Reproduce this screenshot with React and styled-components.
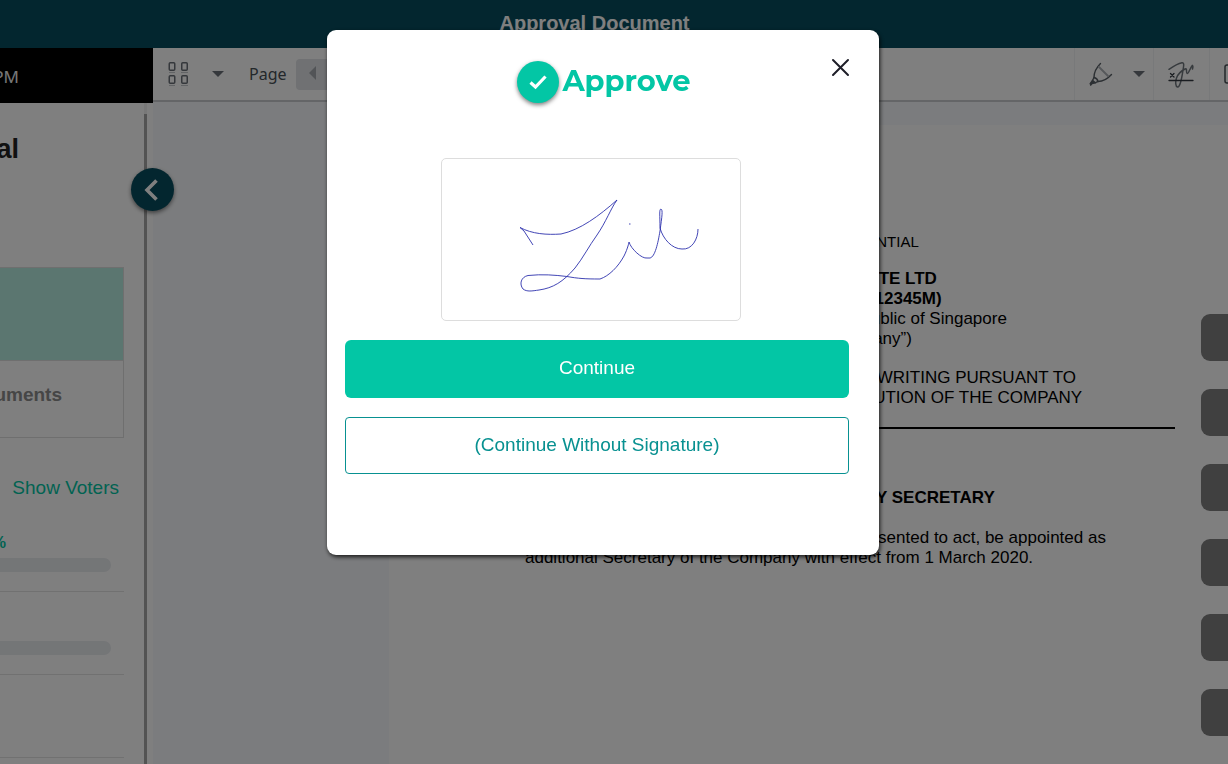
import React from "react";
import styled, { createGlobalStyle } from "styled-components";

const GlobalStyle = createGlobalStyle`
  * {
    box-sizing: border-box;
  }

  body {
    margin: 0;
    overflow: hidden;
    font-family: "Liberation Sans", Arial, sans-serif;
    background: white;
  }

  button {
    font-family: inherit;
    padding: 0;
    border: none;
    background: none;
    cursor: pointer;
  }

  h1, h2, p {
    margin: 0;
  }
`;

const Page = styled.div`
  display: flex;
  flex-direction: column;
  height: 100vh;
`;

const Header = styled.header`
  flex: none;
  height: 48px;
  padding-right: 39px;
  background: #064c5e;
  color: white;
  text-align: center;

  h1 {
    font-size: 20px;
    line-height: 46px;
  }
`;

const Body = styled.div`
  display: flex;
  flex: 1;
  min-height: 0;
`;

const Sidebar = styled.aside`
  position: relative;
  display: flex;
  flex-direction: column;
  flex: none;
  width: 153px;
  background: white;
`;

const Clock = styled.div`
  display: flex;
  justify-content: flex-end;
  flex: none;
  padding-right: 134px;
  overflow: hidden;
  background: black;
  color: #eee;
  font-family: "Noto Sans", sans-serif;
  font-size: 17px;
  line-height: 58px;
  height: 55px;
  white-space: nowrap;
`;

const SidebarScroll = styled.div`
  display: flex;
  flex: 1;
  min-height: 0;
  overflow: hidden;
`;

const Panel = styled.div`
  flex: 1;
  min-width: 0;
  padding-right: 20px;
  overflow: hidden;
`;

const Track = styled.div`
  width: 3px;
  margin-right: 6px;
  padding-top: 11px;
  background: #f0f0f0;

  &::after {
    content: "";
    display: block;
    height: 100%;
    background: #a6a6a6;
  }
`;

/* text that runs out of the panel on its left side */
const Line = styled.div`
  display: flex;
  justify-content: flex-end;
  white-space: nowrap;
`;

const Title = styled(Line)`
  padding: 30px 105px 0 0;
  font-size: 27px;
  font-weight: bold;
  line-height: 32px;
  color: #222;
`;

const Tabs = styled.div`
  margin-top: 102px;
  border: 1px solid #dedede;
  border-left: none;
`;

const ActiveTab = styled.div`
  height: 92px;
  background: #b6ede1;
`;

const Tab = styled(Line)`
  height: 77px;
  padding-right: 61px;
  border-top: 1px solid #dedede;
  color: #8c8c8c;
  font-size: 19px;
  font-weight: bold;
  line-height: 68px;
`;

const VotersLink = styled.a`
  display: block;
  margin: 38px 0 9px;
  padding-right: 5px;
  color: #03c6a5;
  font-size: 19px;
  line-height: 24px;
  text-align: right;
  text-decoration: none;
`;

const Vote = styled.div`
  display: flex;
  flex-direction: column;
  justify-content: flex-end;
  gap: 3px;
  height: 83px;
  padding: 0 13px 19px 0;
  border-bottom: 1px solid #e2e2e2;
`;

const Percent = styled(Line)`
  padding-right: 105px;
  color: #03c6a5;
  font-size: 16px;
  font-weight: bold;
  line-height: 24px;
`;

const Bar = styled.div`
  height: 14px;
  border-radius: 0 7px 7px 0;
  background: #e9ecef;
`;

const Collapse = styled.button`
  position: absolute;
  top: 120px;
  right: -21px;
  z-index: 1;
  display: flex;
  align-items: center;
  justify-content: center;
  width: 43px;
  height: 43px;
  padding-right: 4px;
  border-radius: 50%;
  background: #064c5e;
  box-shadow: 0 2px 4px rgba(0, 0, 0, 0.5);
`;

const Viewer = styled.main`
  position: relative;
  display: flex;
  flex-direction: column;
  flex: 1;
  min-width: 0;
  background: #f7f9fc;
`;

const Toolbar = styled.div`
  display: flex;
  align-items: center;
  justify-content: space-between;
  flex: none;
  height: 54px;
  border-bottom: 2px solid #c8cbcf;
  background: white;
  color: #485056;
  overflow: hidden;
`;

const Tools = styled.div`
  display: flex;
  align-items: center;
  height: 100%;
`;

const GridButton = styled.button`
  margin: 0 22px 0 15px;
  height: 25px;
`;

const Arrow = styled.span`
  border: 6px solid transparent;
  border-top-color: #6a7078;
  border-bottom: none;
`;

const PageLabel = styled.label`
  margin: 0 9px 0 25px;
  font-family: "Noto Sans", sans-serif;
  font-size: 16px;
`;

const PageStep = styled.button`
  width: 60px;
  height: 31px;
  padding-left: 13px;
  border-radius: 4px;
  background: #e0e2e6;
  text-align: left;
`;

const ToolGroup = styled.div`
  display: flex;
  align-items: center;
  gap: 20px;
  height: 100%;
  padding: 0 ${(props) => (props.$menu ? "8px" : "15px")} 0 14px;
  border-left: 1px solid #f1f3f5;

  button {
    flex: none;
  }

  svg {
    display: block;
  }
`;

/* last group runs past the right edge of the toolbar */
const CutGroup = styled(ToolGroup)`
  width: 19px;
  padding-right: 0;
  overflow: hidden;
`;

const Sheet = styled.article`
  flex: 1;
  min-height: 0;
  margin: 23px 0 0 236px;
  padding: 107px 53px 0 136px;
  overflow: hidden;
  background: white;
  color: black;
  font-size: 17px;
  line-height: 20px;
  white-space: nowrap;
`;

const Notice = styled.p`
  margin-bottom: 17px;
  font-size: 15px;
  text-align: center;
`;

const Centered = styled.div`
  display: flex;
  flex-direction: column;
  align-items: center;
  padding-bottom: 19px;
`;

const Clause = styled.div`
  padding-top: 59px;
  border-top: 2px solid black;

  p {
    margin-top: 20px;
  }
`;

const Rail = styled.div`
  position: absolute;
  top: 266px;
  right: 0;
  display: flex;
  flex-direction: column;
  gap: 28px;

  button {
    width: 27px;
    height: 47px;
    border-radius: 9px 0 0 9px;
    background: #808080;
  }
`;

const Overlay = styled.div`
  position: fixed;
  inset: 0;
  z-index: 10;
  display: flex;
  align-items: flex-start;
  justify-content: center;
  padding: 30px 22px 0 0;
  background: rgba(0, 0, 0, 0.5);
`;

const Modal = styled.section`
  position: relative;
  width: 552px;
  padding: 31px 30px 81px 18px;
  border-radius: 9px;
  background: white;
  box-shadow: 1px 2px 4px rgba(0, 0, 0, 0.8);
`;

const ModalTitle = styled.div`
  display: flex;
  align-items: center;
  justify-content: center;
  gap: 3px;
  padding-left: 14px;
  color: #03c6a5;

  h2 {
    padding-bottom: 2px;
    font-family: Montserrat, Inter, sans-serif;
    font-size: 29px;
    font-weight: 700;
    line-height: 38px;
  }
`;

const CheckBadge = styled.span`
  display: flex;
  align-items: center;
  justify-content: center;
  width: 42px;
  height: 42px;
  border-radius: 50%;
  background: #03c6a5;
  box-shadow: 0 2px 4px rgba(0, 0, 0, 0.5);
`;

const CloseButton = styled.button`
  position: absolute;
  top: 28px;
  right: 29px;
  width: 19px;
  height: 19px;
`;

const SignatureBox = styled.div`
  width: 300px;
  height: 163px;
  margin: 55px auto 19px 96px;
  border: 1px solid #ddd;
  border-radius: 5px;
`;

const ModalButton = styled.button`
  display: block;
  width: 100%;
  height: ${(props) => (props.$outlined ? "57px" : "58px")};
  margin-bottom: ${(props) => (props.$outlined ? "0" : "19px")};
  padding-bottom: ${(props) => (props.$outlined ? "1px" : "3px")};
  border: ${(props) => (props.$outlined ? "1px solid #089191" : "none")};
  border-radius: ${(props) => (props.$outlined ? "4px" : "6px")};
  background: ${(props) => (props.$outlined ? "white" : "#03c6a5")};
  color: ${(props) => (props.$outlined ? "#089191" : "white")};
  font-size: 19px;
`;

const GridIcon = () => (
  <svg width="22" height="25" viewBox="0 0 22 25" fill="none" stroke="#6a7078" strokeWidth="1.5">
    <rect x="1.250" y="0.750" width="5.500" height="7.500" rx="1" />
    <rect x="13.750" y="0.750" width="5.500" height="7.500" rx="1" />
    <rect x="1.250" y="13.750" width="5.500" height="7.500" rx="1" />
    <rect x="13.750" y="13.750" width="5.500" height="7.500" rx="1" />
    <path d="M1 10.500h6M13 10.500h7M1 23.500h6M13 23.500h7" stroke="#c5c8cc" strokeWidth="1" />
  </svg>
);

const PenIcon = () => (
  <svg width="24" height="24" viewBox="0 0 24 24" fill="none" stroke="#596067" strokeWidth="1.4" strokeLinecap="round">
    <path d="M11.500 1.500C7 6 5 10 5 15.500M22.500 12.500C18 17.500 14 19.500 9 19.500" />
    <path d="M10 5l9 9" stroke="#adb1b6" strokeWidth="2" />
    <path d="M5 15.500C7.500 16 8.500 17 9 19.500L6 20.800L3.500 18.500z" />
    <path d="M3.500 18.500L6 20.800L3 21.500L1.800 23L1.200 21.500z" fill="#596067" />
  </svg>
);

const SignIcon = () => (
  <svg width="26" height="28" viewBox="0 0 26 28" fill="none" strokeLinecap="round">
    <path
      d="M1 9.300C5 6.500 10 3.500 14 2.700C16 2.400 15.800 4.500 15.500 7C14.500 13 14 18 12.500 22.500C11.500 26 10.500 27.300 9.500 27C7.500 26.500 7.200 22 8.500 18C10 14 14 10.500 17 9C18.500 8.300 18.500 9.500 18.500 11C18.500 14 19.500 14.500 21 11.500C22 9.500 23 7 24.300 5.500C25.300 6 24.800 8 24.500 9"
      stroke="#6f767d"
      strokeWidth="1.5"
    />
    <path d="M2.500 13.500l3.500 3.500m0-3.500l-3.500 3.500M1 20.500h24" stroke="#343b42" strokeWidth="1.3" />
  </svg>
);

const BoxIcon = () => (
  <svg width="20" height="22" viewBox="0 0 20 22" fill="none" stroke="#485056" strokeWidth="1.5">
    <rect x="1" y="2" width="18" height="18" rx="2" />
    <path d="M5 8h6M5 15h6" stroke="#adb1b6" />
  </svg>
);

const Signature = () => (
  <svg width="298" height="161" viewBox="1 1 298 161" fill="none" stroke="#2c31ad" strokeWidth="0.9">
    <path d="M92 87L83 73L79 69.500C91 76 106 77 120 76C139 72 158 58 176 42C170 50 165 64 156 77C148 88 142 100 134 110C122 124 112 130 98 132C91 133 86 134 82 131C78 126 80 119 87 117.500C101 116 114 117 126 118.500C137 120.500 144 121 159 121C168 118 177 109 183 98C187 90 188 84 188 84C190 91 201 101 206 100H209C214 99 217 85 219 73C221 58 222 52 220 51C218 51 219 58 219 70C222 81 231 91 241 91C251 92 257 81 257 71" />
    <path d="M188 66h1.500" />
  </svg>
);

const App = () => {
  return (
    <>
      <GlobalStyle />
      <Page>
        <Header>
          <h1>Approval Document</h1>
        </Header>
        <Body>
          <Sidebar>
            <Clock>PM</Clock>
            <SidebarScroll>
              <Panel>
                <Title>Approval</Title>
                <Tabs>
                  <ActiveTab />
                  <Tab>Documents</Tab>
                </Tabs>
                <VotersLink href="#voters">Show Voters</VotersLink>
                <Vote>
                  <Percent>0%</Percent>
                  <Bar />
                </Vote>
                <Vote>
                  <Bar />
                </Vote>
                <Vote />
              </Panel>
              <Track />
            </SidebarScroll>
            <Collapse aria-label="Collapse sidebar">
              <svg width="14" height="22" viewBox="0 0 14 22" fill="none" stroke="white" strokeWidth="3.6">
                <path d="M12.500 1.500L3 11L12.500 20.500" />
              </svg>
            </Collapse>
          </Sidebar>

          <Viewer>
            <Toolbar>
              <Tools>
                <GridButton aria-label="Thumbnails">
                  <GridIcon />
                </GridButton>
                <Arrow />
                <PageLabel htmlFor="page-step">Page</PageLabel>
                <PageStep id="page-step" aria-label="Previous page">
                  <svg width="8" height="14" viewBox="0 0 8 14">
                    <path d="M7 0v14L0 7z" fill="#a5a9ae" />
                  </svg>
                </PageStep>
              </Tools>
              <Tools>
                <ToolGroup $menu>
                  <button aria-label="Draw">
                    <PenIcon />
                  </button>
                  <Arrow />
                </ToolGroup>
                <ToolGroup>
                  <button aria-label="Sign">
                    <SignIcon />
                  </button>
                </ToolGroup>
                <CutGroup>
                  <button aria-label="Form">
                    <BoxIcon />
                  </button>
                </CutGroup>
              </Tools>
            </Toolbar>
            <Sheet>
              <Notice>Re: CONFIDENTIAL</Notice>
              <Centered>
                <strong>COMPANY 1 PTE LTD</strong>
                <strong>(UEN No. 202012345M)</strong>
                <span>Incorporated in the Republic of Singapore</span>
                <span>(the “Company”)</span>
              </Centered>
              <Centered>
                <span>DIRECTORS RESOLUTIONS IN WRITING PURSUANT TO</span>
                <span>REGULATION OF THE CONSTITUTION OF THE COMPANY</span>
              </Centered>
              <Clause>
                <strong>APPOINTMENTS OF ADDITIONAL COMPANY SECRETARY</strong>
                <p>
                  RESOLVED that the person named having consented to act, be appointed as
                  <br />
                  additional Secretary of the Company with effect from 1 March 2020.
                </p>
              </Clause>
            </Sheet>
            <Rail>
              <button aria-label="Approve" />
              <button aria-label="Reject" />
              <button aria-label="Abstain" />
              <button aria-label="Comment" />
              <button aria-label="Download" />
              <button aria-label="Print" />
            </Rail>
          </Viewer>
        </Body>
      </Page>

      <Overlay>
        <Modal role="dialog" aria-labelledby="approve-title">
          <ModalTitle>
            <CheckBadge>
              <svg width="20" height="16" viewBox="0 0 20 16" fill="none" stroke="white" strokeWidth="3.200">
                <path d="M2.500 8.500L7.500 13L17.500 2.500" />
              </svg>
            </CheckBadge>
            <h2 id="approve-title">Approve</h2>
          </ModalTitle>
          <CloseButton aria-label="Close">
            <svg width="19" height="19" viewBox="0 0 19 19" stroke="#1e1e28" strokeWidth="2" strokeLinecap="round">
              <path d="M2 2L17 17M17 2L2 17" />
            </svg>
          </CloseButton>
          <SignatureBox>
            <Signature />
          </SignatureBox>
          <ModalButton>Continue</ModalButton>
          <ModalButton $outlined>(Continue Without Signature)</ModalButton>
        </Modal>
      </Overlay>
    </>
  );
};

export default App;
